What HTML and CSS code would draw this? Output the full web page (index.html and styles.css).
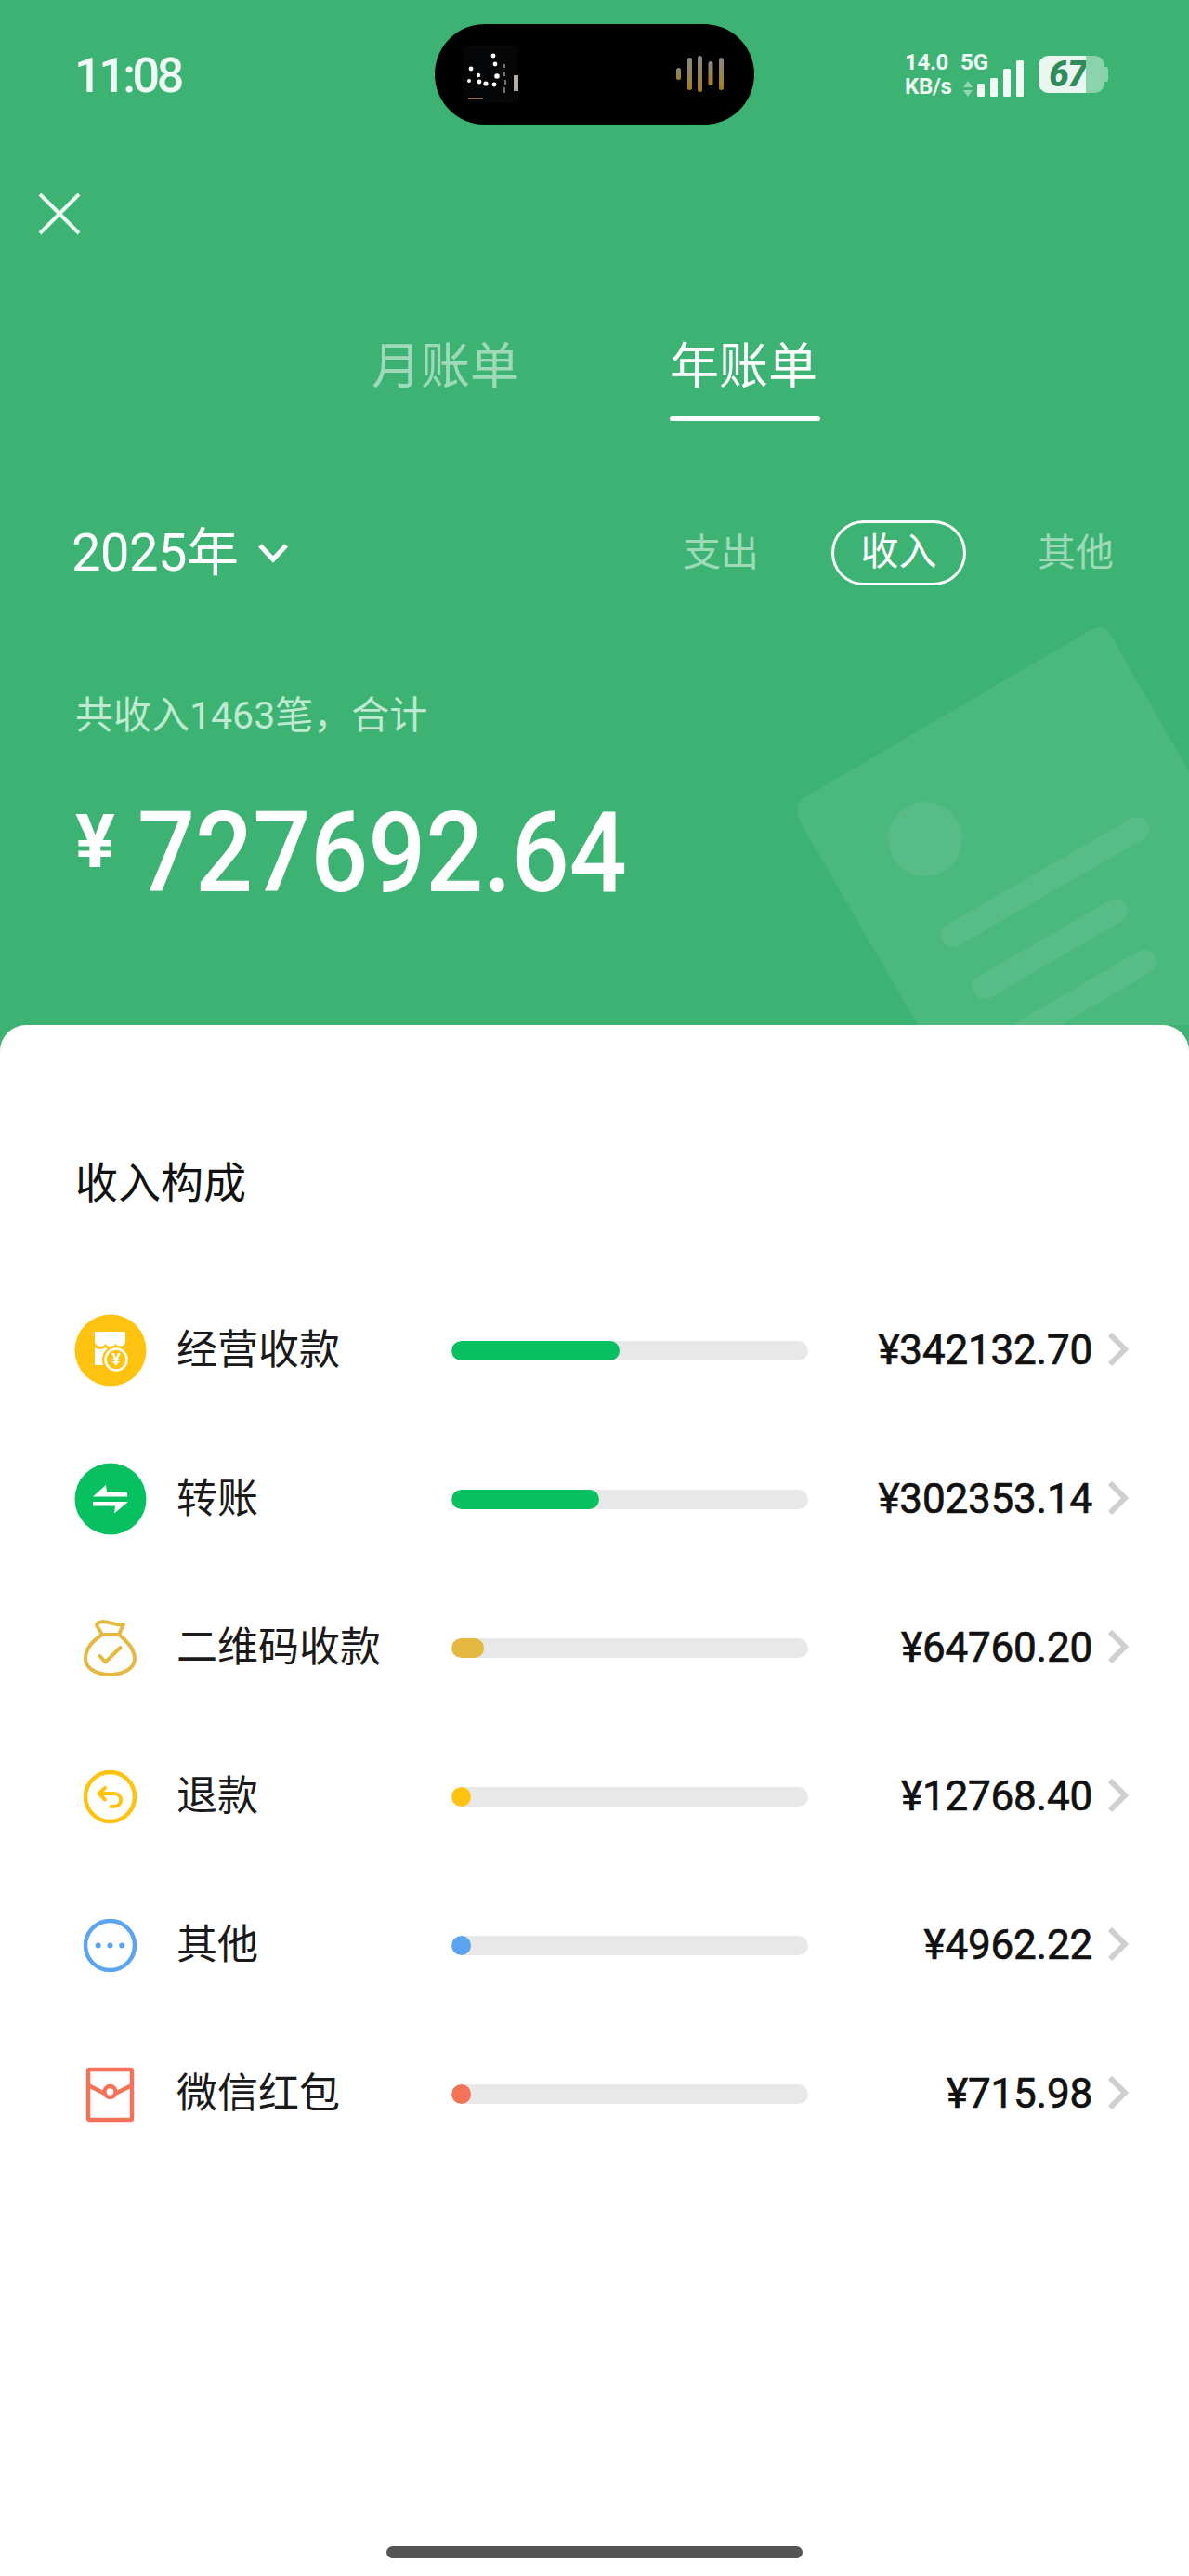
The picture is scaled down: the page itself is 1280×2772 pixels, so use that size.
FILE: index.html
```html
<!DOCTYPE html>
<html lang="zh-CN">
<head>
<meta charset="utf-8">
<title>年账单</title>
<link rel="stylesheet" href="styles.css">
</head>
<body>
<div class="page">
  <section class="hero">
    <svg class="deco" width="1280" height="1103" viewBox="0 0 1280 1103">
      <path d="M868 857 L1174 678 Q1188 670 1196 684 L1320 900 L1320 1103 L988 1103 L861 884 Q854 865 868 857Z" fill="#fff" fill-opacity=".075"/>
      <circle cx="996" cy="903" r="40" fill="#fff" fill-opacity=".065"/>
      <g stroke="#fff" stroke-opacity=".065" stroke-width="26" stroke-linecap="round" fill="none">
        <path d="M1026 1006 L1224 892"/>
        <path d="M1060 1062 L1201 980"/>
        <path d="M1232 1035 L1100 1112"/>
      </g>
    </svg>

    <div class="status">
      <div class="time">11:08</div>
      <div class="island">
        <svg class="thumb" width="60" height="62" viewBox="0 0 60 62">
          <rect width="60" height="62" fill="#050608"/>
          <g fill="#fff">
            <circle cx="33" cy="11" r="2.4"/><circle cx="35" cy="20" r="2.4"/><circle cx="9" cy="25" r="2.4"/>
            <circle cx="17" cy="32" r="2.2"/><circle cx="37" cy="33" r="2.8"/><circle cx="18" cy="39" r="2.4"/>
            <circle cx="25" cy="41" r="2.6"/><circle cx="34" cy="42" r="2.4"/><circle cx="7" cy="38" r="2"/>
          </g>
          <rect x="55" y="32" width="5" height="17" fill="#b5aca0"/>
          <g fill="#77716a">
            <rect x="44" y="20" width="2" height="4"/><rect x="44" y="28" width="2" height="5"/><rect x="45" y="37" width="2" height="5"/><rect x="44" y="45" width="2" height="6"/>
          </g>
          <rect x="6" y="56" width="16" height="2" fill="#8a7461"/>
        </svg>
        <svg class="audio" width="52" height="40" viewBox="0 0 52 40">
          <defs><linearGradient id="au" x1="0" y1="0" x2="0" y2="1"><stop offset="0" stop-color="#888"/><stop offset="1" stop-color="#a57d1e"/></linearGradient></defs>
          <g fill="url(#au)">
            <rect x="0" y="13" width="5" height="13" rx="2.5"/>
            <rect x="12" y="2" width="5" height="35" rx="2.5"/>
            <rect x="23" y="0" width="5" height="39" rx="2.5"/>
            <rect x="34.500" y="6" width="5" height="26" rx="2.5"/>
            <rect x="46" y="2" width="5" height="35" rx="2.5"/>
          </g>
        </svg>
      </div>
      <div class="sys">
        <div class="net">
          <span>14.0</span>
          <span>KB/s</span>
        </div>
        <div class="gen">
          <span class="gen-label">5G</span>
          <div class="sig">
            <svg width="10" height="17" viewBox="0 0 10 17"><path d="M5 0 L10 7 H0Z M0 10 H10 L5 17Z" fill="#fff" fill-opacity=".45"/></svg>
            <i class="b1"></i><i class="b2"></i><i class="b3"></i><i class="b4"></i>
          </div>
        </div>
        <div class="batt"><div class="batt-fill">67</div><div class="batt-rest"></div><div class="batt-nub"></div></div>
      </div>
    </div>

    <div class="closebar">
      <svg width="46" height="46" viewBox="0 0 46 46"><path d="M2 2 L44 44 M44 2 L2 44" stroke="#eaf8f0" stroke-width="4" fill="none"/></svg>
    </div>

    <nav class="tabs">
      <div class="tab">月账单</div>
      <div class="tab tab-on">年账单</div>
    </nav>

    <div class="filters">
      <div class="year">2025年
        <svg width="34" height="24" viewBox="0 0 34 24"><path d="M3 4 L17 19 L31 4" stroke="#fff" stroke-width="5" fill="none"/></svg>
      </div>
      <div class="kinds">
        <span class="kind">支出</span>
        <span class="kind kind-on">收入</span>
        <span class="kind">其他</span>
      </div>
    </div>

    <p class="sum-label">共收入1463笔，合计</p>
    <div class="sum"><span class="yen">¥</span><span class="num">727692.64</span></div>
  </section>

  <section class="sheet">
    <h2 class="title">收入构成</h2>
    <ul class="rows">
      <li class="row">
        <svg class="ic" width="78" height="78" viewBox="0 0 78 78">
          <circle cx="39" cy="39" r="38.500" fill="#FFC30F"/>
          <path d="M22 19 H55 V31 C52 36 47 36 44.500 32 C42 36 36 36 33.500 32 C31 36 25 36 22 31Z" fill="#fff"/>
          <path d="M22 36 C26 39 30 38 33.500 36 C37 39 41 39 44.500 36 C47 38 52 39 55 36 V55 H22Z" fill="#fff"/>
          <circle cx="45" cy="49" r="15" fill="#FFC30F"/>
          <circle cx="45" cy="49" r="11.500" fill="#FFC30F" stroke="#fff" stroke-width="2.500"/>
          <text x="45" y="55" class="ic-yen">¥</text>
        </svg>
        <span class="name">经营收款</span>
        <span class="track"><span class="fill f-green w181"></span></span>
        <span class="amt">¥342132.70</span>
        <svg class="go" width="26" height="38" viewBox="0 0 26 38"><path d="M4 2 L20 18 L4 34" stroke="#cfcfcf" stroke-width="6" fill="none"/></svg>
      </li>
      <li class="row">
        <svg class="ic" width="78" height="78" viewBox="0 0 78 78">
          <circle cx="39" cy="39" r="38.500" fill="#07C160"/>
          <path d="M20 36.500 L34 24 L35 32 H57 V36.500Z M58 42 H20 V46.500 H44 L43 54.500Z" fill="#fff"/>
        </svg>
        <span class="name">转账</span>
        <span class="track"><span class="fill f-green w159"></span></span>
        <span class="amt">¥302353.14</span>
        <svg class="go" width="26" height="38" viewBox="0 0 26 38"><path d="M4 2 L20 18 L4 34" stroke="#cfcfcf" stroke-width="6" fill="none"/></svg>
      </li>
      <li class="row">
        <svg class="ic" width="78" height="78" viewBox="0 0 78 78">
          <g fill="none" stroke="#E5B83F" stroke-width="4" stroke-linecap="round" stroke-linejoin="round">
            <path d="M30 25 C22 30 12 39 12 51 C12 63 27 68 38 68 C50 68 65 63 65 51 C65 39 54 30 48 25"/>
            <path d="M30 25 H48 L53 14 C45 16 38 11 31 11 C27 11 24 13 24 15Z"/>
            <path d="M27.500 48 L33.500 54.500 L49.500 39"/>
          </g>
        </svg>
        <span class="name">二维码收款</span>
        <span class="track"><span class="fill f-gold w35"></span></span>
        <span class="amt">¥64760.20</span>
        <svg class="go" width="26" height="38" viewBox="0 0 26 38"><path d="M4 2 L20 18 L4 34" stroke="#cfcfcf" stroke-width="6" fill="none"/></svg>
      </li>
      <li class="row">
        <svg class="ic" width="78" height="78" viewBox="0 0 78 78">
          <g fill="none" stroke="#FFC30F" stroke-linecap="round" stroke-linejoin="round">
            <circle cx="38.500" cy="39.500" r="26.500" stroke-width="4.500"/>
            <path d="M27 36 H42 C53 36 53 50 42 50 H39.500" stroke-width="4"/>
            <path d="M33 30 L26.500 36 L33 42.500" stroke-width="4"/>
          </g>
        </svg>
        <span class="name">退款</span>
        <span class="track"><span class="fill f-yellow w21"></span></span>
        <span class="amt">¥12768.40</span>
        <svg class="go" width="26" height="38" viewBox="0 0 26 38"><path d="M4 2 L20 18 L4 34" stroke="#cfcfcf" stroke-width="6" fill="none"/></svg>
      </li>
      <li class="row">
        <svg class="ic" width="78" height="78" viewBox="0 0 78 78">
          <circle cx="38.500" cy="39.500" r="26.500" fill="none" stroke="#5BA4F0" stroke-width="4.500"/>
          <g fill="#5BA4F0"><circle cx="25.700" cy="39.500" r="3"/><circle cx="38.500" cy="39.500" r="3"/><circle cx="51.200" cy="39.500" r="3"/></g>
        </svg>
        <span class="name">其他</span>
        <span class="track"><span class="fill f-blue w21"></span></span>
        <span class="amt">¥4962.22</span>
        <svg class="go" width="26" height="38" viewBox="0 0 26 38"><path d="M4 2 L20 18 L4 34" stroke="#cfcfcf" stroke-width="6" fill="none"/></svg>
      </li>
      <li class="row">
        <svg class="ic" width="78" height="78" viewBox="0 0 78 78">
          <g fill="none" stroke="#F47358" stroke-width="4.500" stroke-linejoin="round">
            <rect x="15" y="13" width="47" height="54" rx="1.500"/>
            <path d="M15 30 L32 38.500 M45 38.500 L62 30"/>
            <circle cx="38.500" cy="37" r="6"/>
          </g>
        </svg>
        <span class="name">微信红包</span>
        <span class="track"><span class="fill f-red w21"></span></span>
        <span class="amt">¥715.98</span>
        <svg class="go" width="26" height="38" viewBox="0 0 26 38"><path d="M4 2 L20 18 L4 34" stroke="#cfcfcf" stroke-width="6" fill="none"/></svg>
      </li>
    </ul>
    <div class="home"></div>
  </section>
</div>
</body>
</html>
```

FILE: styles.css
```css
* { box-sizing: border-box; }
html, body { margin: 0; padding: 0; }
body {
  width: 1280px;
  height: 2772px;
  overflow: hidden;
  font-family: Roboto, "Noto Sans CJK SC", sans-serif;
  color: #111;
}
.page {
  width: 1280px;
  height: 2772px;
  display: flex;
  flex-direction: column;
  background: #3DB373;
}

/* hero */
.hero {
  position: relative;
  height: 1103px;
  flex: none;
  color: #fff;
  overflow: hidden;
}
.deco { position: absolute; left: 0; top: 0; }
.hero > *:not(.deco) { position: relative; }

.status {
  height: 108px;
  margin-top: 26px;
  display: grid;
  grid-template-columns: 468px 344px 1fr;
  align-items: center;
}
.time {
  padding: 4px 0 0 80px;
  font-size: 52px;
  font-weight: 500;
  letter-spacing: -3.400px;
  line-height: 56px;
  color: #eefaf3;
}
.island {
  height: 108px;
  background: #000;
  border-radius: 54px;
  display: flex;
  align-items: center;
  justify-content: space-between;
  padding: 0 32px 0 30px;
}
.thumb { display: block; }
.audio { display: block; }
.sys {
  display: flex;
  align-items: center;
  padding-left: 162px;
  height: 46px;
  color: #eefaf3;
  font-weight: 700;
}
.net {
  display: flex;
  flex-direction: column;
  font-size: 24px;
  line-height: 26px;
  width: 62px;
  letter-spacing: -.3px;
}
.gen {
  display: flex;
  flex-direction: column;
  width: 84px;
  margin-left: -2px;
}
.gen-label { font-size: 24px; line-height: 22px; margin-bottom: -14px; }
.sig {
  display: flex;
  align-items: flex-end;
  height: 40px;
  gap: 5px;
  margin-left: 3px;
}
.sig svg { display: block; }
.sig i { display: block; width: 8px; background: #eefaf3; border-radius: 1.500px; margin-left: 1px; }
.sig .b1 { height: 14px; margin-left: 0; }
.sig .b2 { height: 20px; }
.sig .b3 { height: 30px; }
.sig .b4 { height: 39px; }
.batt {
  display: flex;
  align-items: center;
  height: 40px;
  width: 75px;
}
.batt-fill {
  width: 51px;
  height: 40px;
  background: #eaf7f0;
  border-radius: 11px 0 0 11px;
  color: #2E8B5A;
  font-size: 38px;
  font-weight: 900;
  font-style: italic;
  line-height: 40px;
  text-align: right;
  letter-spacing: -1.500px;
  white-space: nowrap;
}
.batt-rest {
  width: 20px;
  height: 40px;
  background: #8BD3AC;
  border-radius: 0 11px 11px 0;
}
.batt-nub {
  width: 4px;
  height: 16px;
  background: #8BD3AC;
  border-radius: 0 3px 3px 0;
}

.closebar { height: 46px; margin-top: 73px; padding-left: 41px; }
.closebar svg { display: block; }

.tabs {
  display: flex;
  margin-top: 104px;
  padding-left: 400px;
  gap: 160px;
}
.tab {
  font-size: 53px;
  line-height: 76px;
  height: 96px;
  color: rgba(255,255,255,.5);
  width: 161px;
}
.tab-on { color: #fff; width: 162px; }
.tab-on::after {
  content: "";
  display: block;
  height: 5px;
  margin-top: 15px;
  background: #fff;
  border-radius: 3px;
}

.filters {
  display: flex;
  align-items: center;
  justify-content: space-between;
  margin-top: 107px;
  padding: 0 81px 0 77px;
  height: 70px;
}
.year {
  display: flex;
  align-items: center;
  gap: 21px;
  font-size: 56px;
  line-height: 70px;
  font-weight: 400;
  letter-spacing: -.5px;
}
.kinds { display: flex; align-items: center; }
.kind {
  font-size: 41px;
  line-height: 70px;
  color: rgba(255,255,255,.5);
  width: 82px;
  white-space: nowrap;
}
.kind-on {
  color: #fff;
  width: 145px;
  height: 70px;
  margin: 0 77px 0 78px;
  border: 3px solid #fff;
  border-radius: 35px;
  text-align: center;
  line-height: 62px;
}

.sum-label {
  margin: 110px 0 0 81px;
  font-size: 41px;
  line-height: 60px;
  font-weight: 400;
  color: #bfe9d0;
}
.sum {
  display: flex;
  align-items: flex-start;
  margin: 58px 0 0 81px;
}
.yen {
  font-size: 80px;
  line-height: 96px;
  font-weight: 700;
  width: 67px;
}
.num {
  display: block;
  font-size: 120px;
  line-height: 120px;
  font-weight: 500;
  transform: scaleX(.91);
  transform-origin: left center;
}

/* sheet */
.sheet {
  flex: 1;
  background: #fff;
  border-radius: 28px 28px 0 0;
  padding: 0 63px 0 80px;
  display: flex;
  flex-direction: column;
}
.title {
  margin: 137px 0 0 1px;
  font-size: 46px;
  line-height: 66px;
  font-weight: 400;
  color: #111;
}
.rows {
  list-style: none;
  margin: 108px 0 0;
  padding: 0;
  display: flex;
  flex-direction: column;
  gap: 82px;
}
.row {
  height: 78px;
  display: flex;
  align-items: center;
}
.ic { flex: none; display: block; }
.ic-yen {
  font-size: 18px;
  font-weight: 700;
  fill: #fff;
  text-anchor: middle;
}
.name {
  width: 295px;
  flex: none;
  margin-left: 32px;
  font-size: 44px;
  line-height: 60px;
  color: #1a1a1a;
}
.track {
  display: block;
  width: 384px;
  height: 21px;
  flex: none;
  margin-left: 1px;
  background: #E8E8E8;
  border-radius: 10.500px;
  overflow: hidden;
}
.fill { display: block; height: 21px; border-radius: 10.500px; }
.f-green { background: #07C160; }
.f-gold { background: #E5B83F; }
.f-yellow { background: #FFC30F; }
.f-blue { background: #5BA4F0; }
.f-red { background: #F47358; }
.w181 { width: 181px; }
.w159 { width: 159px; }
.w35 { width: 35px; }
.w21 { width: 21px; }
.amt {
  flex: 1;
  text-align: right;
  font-size: 44px;
  font-weight: 400;
  line-height: 60px;
  color: #111;
  letter-spacing: -.2px;
  -webkit-text-stroke: .7px #111;
}
.go { flex: none; margin-left: 15px; display: block; }
.home {
  width: 448px;
  height: 13px;
  margin: auto 0 19px 336px;
  background: #555;
  border-radius: 7px;
}
```
